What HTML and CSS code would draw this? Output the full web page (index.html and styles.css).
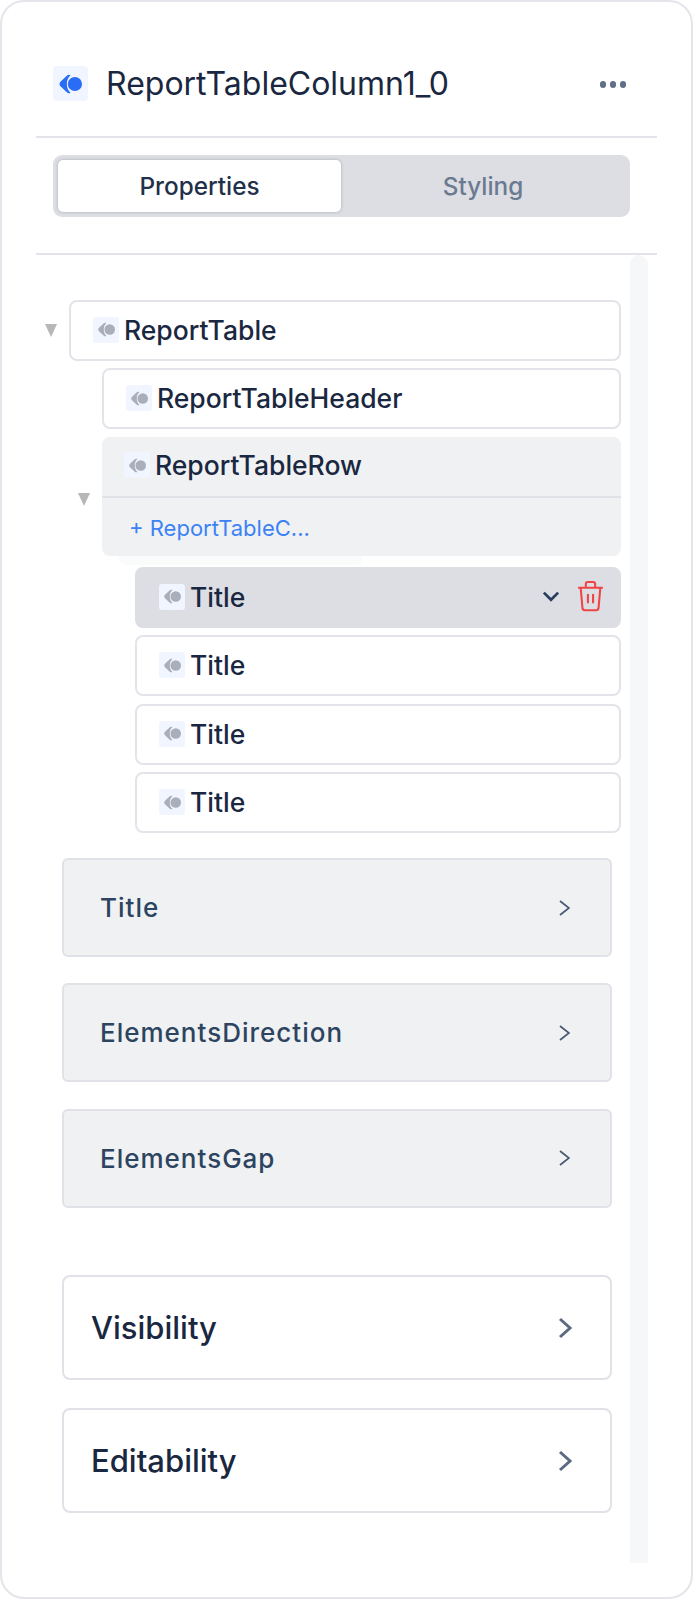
FILE: index.html
```html
<!DOCTYPE html>
<html lang="en">
<head>
<meta charset="utf-8">
<title>ReportTableColumn1_0</title>
<link rel="stylesheet" href="styles.css">
</head>
<body>
<svg class="defs" width="0" height="0" aria-hidden="true">
  <symbol id="logo" viewBox="0 0 22 19">
    <path d="M7.500 1.500 C8.500 .5 10 .5 11 1.200 C8.800 3 7.500 6 7.500 9.500 C7.500 13 8.800 16 11 17.800 C10 18.500 8.500 18.500 7.500 17.500 L1.600 12 A3.400 3.400 0 0 1 1.600 7 Z"/>
    <circle cx="15.200" cy="9.500" r="6.800"/>
  </symbol>
</svg>
<main class="panel">
  <header class="head">
    <span class="icon icon-lg"><svg class="glyph-lg"><use href="#logo"/></svg></span>
    <h1 class="name">ReportTableColumn1_0</h1>
    <span class="dots"><i></i><i></i><i></i></span>
  </header>
  <div class="tabs-wrap">
    <div class="tabs">
      <div class="tab tab-on">Properties</div>
      <div class="tab">Styling</div>
    </div>
  </div>
  <div class="body">
    <div class="content">
      <div class="tree">
        <div class="row row-0">
          <span class="twisty"></span>
          <div class="node"><span class="icon"><svg class="glyph"><use href="#logo"/></svg></span><span class="label">ReportTable</span></div>
        </div>
        <div class="row row-1">
          <div class="node"><span class="icon"><svg class="glyph"><use href="#logo"/></svg></span><span class="label">ReportTableHeader</span></div>
        </div>
        <div class="row row-1b">
          <span class="twisty twisty-mid"></span>
          <div class="group">
            <div class="group-top"><span class="icon"><svg class="glyph"><use href="#logo"/></svg></span><span class="label">ReportTableRow</span></div>
            <div class="group-add">+ ReportTableC...</div>
          </div>
        </div>
        <div class="ghost"></div>
        <div class="row row-2 row-sel">
          <div class="node node-sel"><span class="icon"><svg class="glyph"><use href="#logo"/></svg></span><span class="label">Title</span>
            <span class="actions">
              <svg class="chev-down" viewBox="0 0 16 10"><path d="M1.500 1.500 L8 8 L14.500 1.500"/></svg>
              <svg class="trash" viewBox="0 0 26 30"><path d="M1 6.500 H25 M3.500 6.500 L5.200 26 a2.500 2.500 0 0 0 2.500 2.300 H18.300 a2.500 2.500 0 0 0 2.500-2.300 L22.500 6.500 M8.500 6.500 V3 a2 2 0 0 1 2-2 H15.500 a2 2 0 0 1 2 2 V6.500 M10.500 12.500 V21.500 M15.500 12.500 V21.500"/></svg>
            </span>
          </div>
        </div>
        <div class="row row-2">
          <div class="node"><span class="icon"><svg class="glyph"><use href="#logo"/></svg></span><span class="label">Title</span></div>
        </div>
        <div class="row row-2">
          <div class="node"><span class="icon"><svg class="glyph"><use href="#logo"/></svg></span><span class="label">Title</span></div>
        </div>
        <div class="row row-2">
          <div class="node"><span class="icon"><svg class="glyph"><use href="#logo"/></svg></span><span class="label">Title</span></div>
        </div>
      </div>
      <div class="cards-grey">
        <div class="card-grey"><span>Title</span><svg class="chev-sm" viewBox="0 0 11 16"><path d="M1 1 L10 8 L1 15"/></svg></div>
        <div class="card-grey"><span>ElementsDirection</span><svg class="chev-sm" viewBox="0 0 11 16"><path d="M1 1 L10 8 L1 15"/></svg></div>
        <div class="card-grey"><span>ElementsGap</span><svg class="chev-sm" viewBox="0 0 11 16"><path d="M1 1 L10 8 L1 15"/></svg></div>
      </div>
      <div class="cards-white">
        <div class="card-white"><span>Visibility</span><svg class="chev-lg" viewBox="0 0 14 22"><path d="M2 2 L12 11 L2 20"/></svg></div>
        <div class="card-white"><span>Editability</span><svg class="chev-lg" viewBox="0 0 14 22"><path d="M2 2 L12 11 L2 20"/></svg></div>
      </div>
    </div>
    <div class="scrollbar"></div>
  </div>
</main>
</body>
</html>
```

FILE: styles.css
```css
* { box-sizing: border-box; }
html, body { margin: 0; padding: 0; background: #fff; }
body { font-family: "Inter", "Liberation Sans", sans-serif; color: #14213d; }
.defs { position: absolute; }

.panel {
  width: 693px;
  height: 1599px;
  border: 2px solid #e3e5ea;
  border-radius: 24px;
  background: #fff;
  overflow: hidden;
}

.head {
  margin: 0 34px;
  height: 136px;
  padding: 64px 31px 0 17px;
  display: flex;
  align-items: flex-start;
  border-bottom: 2px solid #e2e4e9;
}
.icon {
  flex: none;
  width: 26px;
  height: 26px;
  border-radius: 3px;
  background: #f0f5ff;
  color: #a9afba;
  display: flex;
  align-items: center;
  justify-content: center;
}
.icon-lg { width: 35px; height: 35px; border-radius: 4px; color: #2b6cf6; }
.glyph { width: 17px; height: 15px; fill: currentColor; }
.glyph-lg { width: 23px; height: 20px; fill: currentColor; }
.name {
  margin: 0 0 0 18px;
  font-size: 32px;
  line-height: 36px;
  font-weight: 400;
  flex: 1;
  color: #1a2740;
}
.dots { display: flex; gap: 3.500px; margin-top: 15px; }
.dots i { width: 6.500px; height: 6.500px; border-radius: 50%; background: #5f6f87; }

.tabs-wrap {
  margin: 0 34px;
  padding: 17px 27px 36px 17px;
  border-bottom: 2px solid #e2e4e9;
}
.tabs {
  height: 62px;
  display: flex;
  padding: 5px;
  background: #dcdee3;
  border-radius: 9px;
}
.tab {
  flex: 1;
  font-size: 24.300px;
  font-weight: 450;
  color: #6b7a90;
  display: flex;
  align-items: center;
  justify-content: center;
}
.tab-on {
  flex: none;
  width: 283px;
  background: #fff;
  color: #22304a;
  border-radius: 5px;
  box-shadow: 0 0 3px rgba(90, 95, 110, .45);
}

.body { display: flex; align-items: flex-start; }
.content { width: 628px; }
.scrollbar {
  width: 18px;
  height: 1308px;
  background: #f6f7f9;
  border-radius: 9px 9px 0 0;
}

.tree { padding-top: 44.500px; padding-right: 9px; display: flex; flex-direction: column; gap: 7.500px; }
.row { display: flex; align-items: center; }
.row-0 { padding-left: 43px; }
.row-1 { padding-left: 100px; }
.row-1b { padding-left: 76px; }
.row-2 { padding-left: 133px; }
.row-sel { margin-top: 2px; }

.twisty {
  flex: none;
  width: 0;
  height: 0;
  margin-right: 12px;
  border-left: 6.500px solid transparent;
  border-right: 6.500px solid transparent;
  border-top: 13px solid #b7b7b7;
}
.twisty-mid { margin-top: 6px; }

.node {
  flex: 1;
  height: 61px;
  display: flex;
  align-items: center;
  padding-left: 22px;
  padding-bottom: 1px;
  background: #fff;
  border: 2px solid #e2e4ea;
  border-radius: 8px;
  gap: 5px;
}
.label { font-size: 26.500px; font-weight: 450; color: #1a2740; }
.node-sel { background: #dcdee3; border-color: #dcdee3; padding-right: 15px; }
.actions { margin-left: auto; display: flex; align-items: center; gap: 17px; }
.chev-down { width: 18px; height: 11px; fill: none; stroke: #2a3f5f; stroke-width: 2.500; }
.trash { width: 27px; height: 31px; fill: none; stroke: #ef4444; stroke-width: 2; }

.group {
  flex: 1;
  height: 119px;
  background: #f0f1f3;
  border-radius: 8px;
}
.group-top {
  height: 61px;
  display: flex;
  align-items: center;
  gap: 5px;
  padding-left: 22px;
  padding-bottom: 2px;
  border-bottom: 2px solid #e0e2e7;
}
.group-add {
  height: 60px;
  display: flex;
  align-items: center;
  padding-left: 27px;
  font-size: 22px;
  color: #3b82f6;
}
.ghost {
  height: 9px;
  width: 243px;
  margin: -7.500px 0 -7.500px 117px;
  background: #fafbfb;
  border-radius: 0 0 6px 6px;
}

.cards-grey { margin: 25px 0 0 60px; width: 550px; display: flex; flex-direction: column; gap: 26.300px; }
.card-grey {
  height: 99px;
  display: flex;
  align-items: center;
  justify-content: space-between;
  padding: 0 40px 0 36px;
  background: #f0f1f3;
  border: 2px solid #e0e2e7;
  border-radius: 6px;
  font-size: 26px;
  font-weight: 450;
  letter-spacing: 1px;
  color: #2d4460;
}
.chev-sm { width: 11px; height: 16px; fill: none; stroke: #4a5a72; stroke-width: 1.800; }

.cards-white { margin: 67.500px 0 0 60px; width: 550px; display: flex; flex-direction: column; gap: 28px; }
.card-white {
  height: 105px;
  display: flex;
  align-items: center;
  justify-content: space-between;
  padding: 0 38px 0 27px;
  background: #fff;
  border: 2px solid #e0e2e7;
  border-radius: 8px;
  font-size: 31px;
  font-weight: 450;
  color: #1a2740;
}
.chev-lg { width: 14px; height: 22px; fill: none; stroke: #5c6b82; stroke-width: 3; }
```
